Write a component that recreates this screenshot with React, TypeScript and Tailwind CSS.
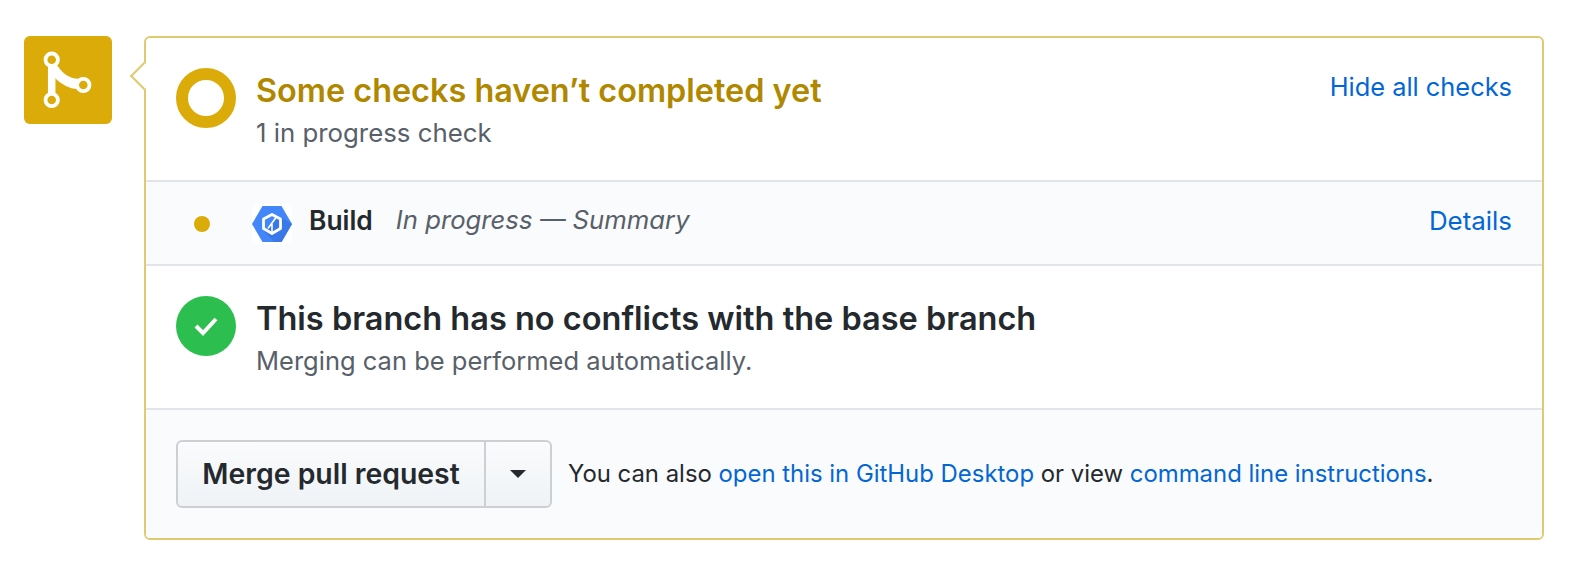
export default function App() {
  return (
    <div className="relative h-[572px] w-[1580px] overflow-hidden bg-white font-['Inter',sans-serif] text-[#24292e]">
      <div className="flex items-start gap-8 pl-6 pt-9">
        <div className="h-[88px] w-[88px] rounded-[6px] bg-[#dbab09]">
          <svg width="88" height="88" viewBox="0 0 88 88" fill="none" stroke="white">
            <path d="M27.7 26V62" strokeWidth="7.5" />
            <path d="M31 28L34.3 30.7C39 38 45 42 54.3 42.8V53C45 53 37 48 31 42Z" fill="white" stroke="none" />
            <circle cx="27.7" cy="23.7" r="6.2" strokeWidth="3.8" fill="#dbab09" />
            <circle cx="27.7" cy="64" r="6.2" strokeWidth="3.8" fill="#dbab09" />
            <circle cx="59.3" cy="49" r="6.2" strokeWidth="3.8" fill="#dbab09" />
          </svg>
        </div>
        <div className="relative h-[504px] w-[1400px] rounded-[6px] border-2 border-[#e0c971] bg-white">
          <div className="absolute -left-[12px] top-[28px] h-5 w-5 rotate-45 border-b-2 border-l-2 border-[#e0c971] bg-white" />
          <div className="relative flex h-[144px] border-b-2 border-[#e1e4e8] pl-[30px] pr-[30px] pt-[30px]">
            <div className="h-[60px] w-[60px] shrink-0 rounded-full border-[12px] border-[#dbab09]" />
            <div className="ml-5 flex-1">
              <div className="text-[32.4px] font-semibold leading-[46px] text-[#b08800]">Some checks haven’t completed yet</div>
              <div className="text-[25.8px] leading-[38px] text-[#586069]">1 in progress check</div>
            </div>
            <a className="text-[25.4px] leading-[38px] text-[#0366d6]">Hide all checks</a>
          </div>
          <div className="relative flex h-[84px] items-center border-b-2 border-[#e1e4e8] bg-[#fafbfc] pl-[48px] pr-[30px]">
            <div className="mt-[2px] h-4 w-4 rounded-full bg-[#dbab09]" />
            <div className="ml-[42px] mt-[2px] flex h-10 w-10 items-center justify-center rounded-md bg-white">
              <svg width="40" height="40" viewBox="0 0 40 40">
                <path d="M10.5 2H29.5L40 20L29.5 38H10.5L0 20Z" fill="#4386fa" />
                <path d="M27.5 12.5L40 20L29.5 38H22L12 27Z" fill="#3b78e7" />
                <path d="M20 10.5L28.5 15V24.5L20 29.5L11.5 24.5V15Z" fill="none" stroke="white" strokeWidth="2.8" strokeLinejoin="round" />
                <path d="M20 20V29M16 24.5L24 13.5" fill="none" stroke="white" strokeWidth="1.6" />
              </svg>
            </div>
            <span className="mb-[5px] ml-[17px] text-[26.4px] font-semibold">Build</span>
            <span className="mb-[5px] ml-[23px] flex-1 text-[25.7px] italic text-[#586069]">In progress — Summary</span>
            <a className="mb-[4px] text-[25.9px] text-[#0366d6]">Details</a>
          </div>
          <div className="relative flex h-[144px] border-b-2 border-[#e1e4e8] pl-[30px] pt-[30px]">
            <div className="flex h-[60px] w-[60px] shrink-0 items-center justify-center rounded-full bg-[#2cbe4e]">
              <svg width="26" height="26" viewBox="0 0 26 26" fill="none" stroke="white" strokeWidth="4">
                <path d="M3 13L10 20L23 6" />
              </svg>
            </div>
            <div className="ml-5">
              <div className="text-[32.5px] font-semibold leading-[46px]">This branch has no conflicts with the base branch</div>
              <div className="text-[25.5px] leading-[38px] text-[#586069]">Merging can be performed automatically.</div>
            </div>
          </div>
          <div className="flex h-[128px] items-center rounded-b-[4px] bg-[#fafbfc] pl-[30px] text-[23.9px]">
            <div className="flex h-[68px] rounded-[6px] border-2 border-[#cdcfd2] bg-gradient-to-b from-[#fafbfc] to-[#eff3f6]">
              <div className="flex w-[308px] items-center justify-center border-r-2 border-[#cdcfd2] text-[28.4px] font-semibold">Merge pull request</div>
              <div className="flex w-[64px] items-center justify-center">
                <svg width="16" height="8" viewBox="0 0 16 8"><path d="M0 0H16L8 8Z" fill="#24292e" /></svg>
              </div>
            </div>
            <p className="ml-[16px]">
              You can also <a className="text-[#0366d6]">open this in GitHub Desktop</a> or view <a className="text-[#0366d6]">command line instructions</a>.
            </p>
          </div>
        </div>
      </div>
    </div>
  );
}
